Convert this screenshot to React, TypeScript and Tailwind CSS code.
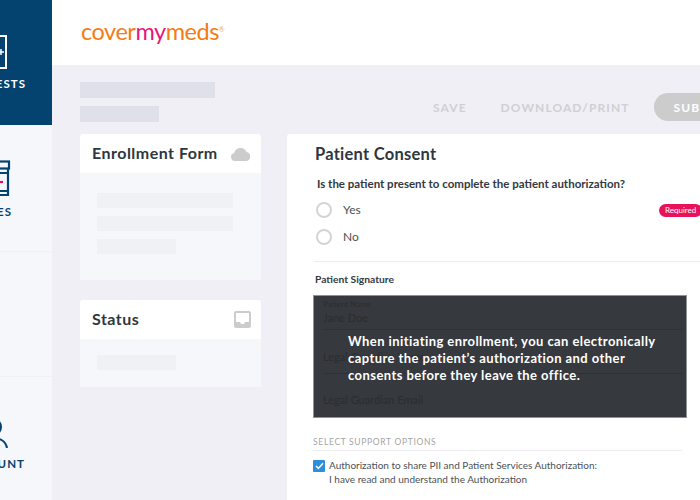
const font = { fontFamily: 'Lato, "Noto Sans", sans-serif' }

function Skeleton({ className }: { className: string }) {
  return <div className={`bg-[#f0f1f4] h-[15px] ${className}`} />
}

function SideItem({
  label,
  icon,
  active,
  className,
}: {
  label: string
  icon: React.ReactNode
  active?: boolean
  className: string
}) {
  return (
    <div
      className={`flex flex-col items-end overflow-hidden ${className} ${
        active ? 'bg-[#04426f] text-white' : 'border-b border-[#f0f1f4] text-[#04426f]'
      }`}
    >
      {icon}
      <span className="font-bold text-[11.5px] tracking-[0.09em] leading-[14px] whitespace-nowrap">
        {label}
      </span>
    </div>
  )
}

function SideCard({
  title,
  icon,
  children,
}: {
  title: string
  icon: React.ReactNode
  children: React.ReactNode
}) {
  return (
    <div className="rounded-t-[3px] overflow-hidden">
      <div className="bg-white h-[39px] pl-3 pr-[10px] flex items-center justify-between">
        <span className="font-bold text-[16px] tracking-[0.03em] text-[#2e3740] -mt-[2px]">{title}</span>
        {icon}
      </div>
      <div className="bg-[#f6f7fa] px-[17px] flex flex-col gap-2">{children}</div>
    </div>
  )
}

export default function App() {
  return (
    <div className="w-[700px] h-[500px] flex overflow-hidden bg-[#efeff5]" style={font}>
      <aside className="w-[52px] shrink-0 bg-[#f6f7fa] flex flex-col">
        <SideItem
          active
          label="REQUESTS"
          className="h-[125px] pr-[26px]"
          icon={
            <svg width="32" height="34" viewBox="0 0 32 34" className="mt-[35px] mb-[8px] mr-[19px]" fill="none" stroke="currentColor" strokeWidth="2">
              <rect x="1" y="1" width="30" height="32" />
              <path d="M29 17h-6M26 14v6" strokeWidth="1.5" />
            </svg>
          }
        />
        <SideItem
          label="MEDICINES"
          className="h-[127px] pr-[40px]"
          icon={
            <svg width="30" height="37" viewBox="0 0 30 37" className="mt-[35px] mb-[8px] mr-[1px]" fill="none" stroke="currentColor" strokeWidth="2.2">
              <rect x="2" y="1.5" width="26" height="7" />
              <path d="M5 9v26h22V9" />
              <path d="M5 13h22M5 31h22" />
              <path d="M14 22h8" stroke="#e8125c" />
            </svg>
          }
        />
        <div className="h-[125px] border-b border-[#f0f1f4]" />
        <SideItem
          label="ACCOUNT"
          className="border-b-0 flex-1 pr-[27px]"
          icon={
            <svg width="30" height="30" viewBox="0 0 30 30" className="mt-[41px] mb-[9px] mr-[17px]" fill="none" stroke="currentColor" strokeWidth="2">
              <circle cx="15" cy="9" r="8" />
              <path d="M1 30c1-6 6-10 14-10s13 4 14 10" />
            </svg>
          }
        />
      </aside>

      <main className="flex-1 min-w-0 flex flex-col">
        <header className="h-[65px] shrink-0 bg-white flex items-center pl-[29px] pb-[1px]">
          <span className="text-[23.5px] leading-none tracking-[-0.02em] text-[#f47b16]">
            cover<span className="text-[#e8167c]">my</span>meds
          </span>
          <span className="text-[7px] text-[#f2a668] mb-[6px]">®</span>
        </header>

        <div className="flex-1 pl-7 flex flex-col gap-[13px] pt-[17px] overflow-hidden">
          <div className="flex items-start h-[39px] shrink-0">
            <div className="flex flex-col gap-2 w-[135px] shrink-0">
              <div className="h-4 bg-[#e0e0eb]" />
              <div className="h-4 w-[79px] bg-[#e0e0eb]" />
            </div>
            <div className="ml-[218px] flex items-center mt-[11px] whitespace-nowrap text-[#d0d0d3] font-bold text-[12px] tracking-[0.09em]">
              <span className="mt-[2px]">SAVE</span>
              <span className="ml-[34px] mt-[2px]">DOWNLOAD/PRINT</span>
              <div className="ml-[24px] w-[90px] h-[28px] rounded-full bg-[#cccccc] text-white pl-5 pt-[1px] flex items-center shrink-0">
                SUBMIT
              </div>
            </div>
          </div>

          <div className="flex gap-[26px] items-start">
            <div className="w-[181px] shrink-0 flex flex-col gap-5">
              <SideCard
                title="Enrollment Form"
                icon={
                  <svg width="20" height="14" viewBox="0 0 20 14" fill="#cccccc">
                    <path d="M4 14a4 4 0 0 1-.8-7.9A6.5 6.5 0 0 1 15.5 5 4.6 4.6 0 0 1 15.5 14z" />
                  </svg>
                }
              >
                <Skeleton className="mt-5 w-[136px]" />
                <Skeleton className="w-[136px]" />
                <Skeleton className="w-[79px] mb-[26px]" />
              </SideCard>

              <SideCard
                title="Status"
                icon={
                  <svg width="17" height="17" viewBox="0 0 17 17">
                    <rect width="17" height="17" rx="2" fill="#cccccc" />
                    <path d="M2 2h13v9h-4l-1 2H7l-1-2H2z" fill="#ffffff" />
                  </svg>
                }
              >
                <Skeleton className="mt-4 w-[79px] mb-[17px]" />
              </SideCard>
            </div>

            <section className="w-[500px] shrink-0 bg-white rounded-t-[3px] h-[400px] pl-[26px] pr-[87px]">
              <h2 className="font-bold text-[16.5px] tracking-[0.015em] text-[#2e3740] pt-[8px] leading-6 ml-[2px]">
                Patient Consent
              </h2>
              <p className="font-bold text-[11.5px] text-[#33393f] mt-[10px] ml-[4px] leading-4">
                Is the patient present to complete the patient authorization?
              </p>
              <div className="relative mt-[10px] ml-[3px] flex flex-col gap-[11px] text-[12px] text-[#4c5156] h-[42px]">
                <label className="flex items-center gap-[11px] h-[16px]">
                  <span className="size-[16px] rounded-full border-2 border-[#d4d4d6]" />
                  Yes
                </label>
                <label className="flex items-center gap-[11px] h-[16px]">
                  <span className="size-[16px] rounded-full border-2 border-[#d4d4d6]" />
                  No
                </label>
                <span className="absolute left-[343px] top-[2px] h-[13px] rounded-full bg-[#e8125c] text-white text-[8px] leading-[13px] px-[6px]">
                  Required
                </span>
              </div>
              <div className="border-t border-[#ececf0] mt-[17px] pt-[10px] -mr-[20px] ml-[1px]" />
              <p className="font-bold text-[10.3px] text-[#33393f] ml-[2px] leading-[14px]">Patient Signature</p>

              <div className="relative mt-[9px] w-[374px] h-[123px] bg-[#36393e] border border-[#8f9194] text-[#2b2d31]">
                <div className="ml-[9px] mr-[4px] h-[34px] pt-[3px] border-b border-[#2e3135]">
                  <div className="text-[8px] leading-[10px]">Patient Name</div>
                  <div className="text-[11px] leading-[17px]">Jane Doe</div>
                </div>
                <div className="ml-[9px] mr-[4px] h-[44px] pt-[20px] border-b border-[#2e3135] text-[11px] leading-[13px]">
                  Legal Guardian Name
                </div>
                <div className="ml-[9px] pt-[19px] text-[11px] leading-[13px]">Legal Guardian Email</div>
                <p className="absolute left-[34px] top-[37px] w-[330px] text-white font-bold text-[13px] leading-[17px] tracking-[0.033em]">
                  When initiating enrollment, you can electronically capture the patient’s authorization and other consents before they leave the office.
                </p>
              </div>

              <p className="mt-[18px] text-[8.5px] tracking-[0.08em] leading-3 text-[#a3a5a8]">SELECT SUPPORT OPTIONS</p>
              <div className="border-t border-[#ececf0] mt-[2px] w-[369px]" />
              <div className="flex gap-[4px] mt-[7px] text-[10px] leading-[14px] text-[#4c5156]">
                <span className="size-[12px] mt-[2px] rounded-[1px] bg-[#2d8fdb] flex items-center justify-center shrink-0">
                  <svg width="9" height="8" viewBox="0 0 9 8" fill="none" stroke="#ffffff" strokeWidth="1.5">
                    <path d="M1 4l2.4 2.4L8 1.2" />
                  </svg>
                </span>
                <span>
                  Authorization to share PII and Patient Services Authorization:
                  <br />
                  I have read and understand the Authorization
                </span>
              </div>
            </section>
          </div>
        </div>
      </main>
    </div>
  )
}
